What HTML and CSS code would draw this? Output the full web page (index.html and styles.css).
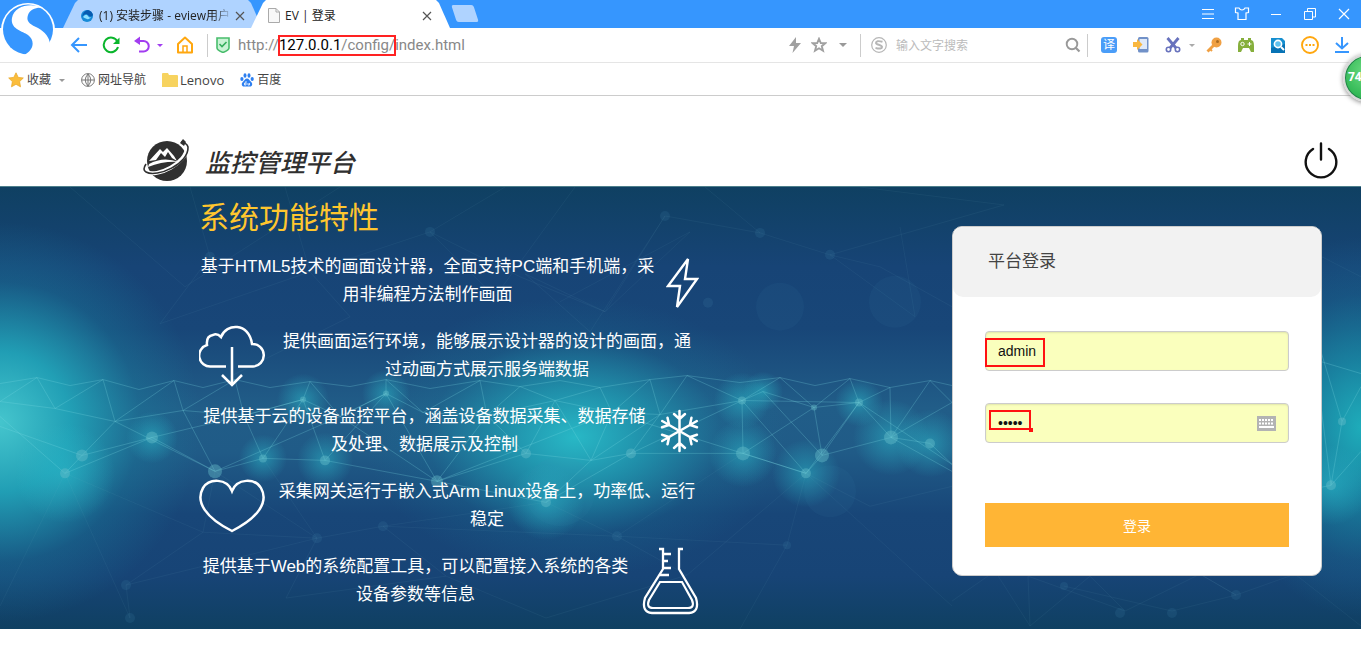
FILE: index.html
```html
<!DOCTYPE html>
<html lang="zh-CN">
<head>
<meta charset="utf-8">
<meta name="viewport" content="width=device-width, initial-scale=1">
<title>EV | 登录</title>
<link rel="stylesheet" href="styles.css">
</head>
<body>
<div class="browser">
  <svg class="sogou" viewBox="0 0 56 56" aria-hidden="true">
    <circle cx="28" cy="29" r="27" fill="#fff"/>
    <circle cx="28" cy="28.500" r="25" fill="#3696fe"/>
    <path d="M43 7C31 1 14 5 12 17C10 28 22 30 28 34C36 40 33 50 24 54C36 57 43 55 48 49C53 41 47 32 38 27C29 23 26 20 28 14C30 8 37 6 43 7Z" fill="#fff"/>
  </svg>
  <div class="ball"><span>74</span></div>

  <div class="tabbar">
    <div class="tab tab-back">
      <svg width="14" height="14" viewBox="0 0 14 14"><circle cx="7" cy="7" r="6" fill="#168bd8"/><path d="M2 8Q5 3 8 6T13 6Q12 2 8 1Q3 2 2 8Z" fill="#075bb0"/><path d="M3 8Q6 4 8 7T12 7Q10 11 7 10T3 8Z" fill="#8ee0ff"/></svg>
      <span class="tab-title fade">(1) 安装步骤 - eview用户</span>
      <button class="close" type="button" aria-label="关闭标签"><svg width="10" height="10" viewBox="0 0 10 10"><path d="M1 1L9 9M9 1L1 9" stroke="#555" stroke-width="1.200"/></svg></button>
    </div>
    <div class="tab tab-front">
      <svg width="12" height="15" viewBox="0 0 12 15"><path d="M.5.5H8L11.500 4V14.500H.5ZM8 .5V4H11.500" fill="#f8f8f8" stroke="#aaa"/></svg>
      <span class="tab-title">EV | 登录</span>
      <button class="close" type="button" aria-label="关闭标签"><svg width="10" height="10" viewBox="0 0 10 10"><path d="M1 1L9 9M9 1L1 9" stroke="#555" stroke-width="1.200"/></svg></button>
    </div>
    <button class="newtab" type="button" aria-label="新建标签"></button>
    <div class="window-buttons">
      <button type="button" aria-label="菜单"><svg width="14" height="12" viewBox="0 0 14 12"><path d="M1 1.500H13M1 6H13M1 10.500H13" stroke="#fff"/></svg></button>
      <button type="button" aria-label="皮肤"><svg width="16" height="14" viewBox="0 0 16 14"><path d="M5 1H1.500V5.500L4 6V12.500H12V6L14.500 5.500V1H11Q10 3 8 3T5 1Z" fill="none" stroke="#fff" stroke-width="1.200"/></svg></button>
      <button type="button" aria-label="最小化"><svg width="12" height="12" viewBox="0 0 12 12"><path d="M1 6.500H11" stroke="#fff"/></svg></button>
      <button type="button" aria-label="还原"><svg width="12" height="12" viewBox="0 0 12 12"><path d="M.5 3.500H8.500V11.500H.5ZM3.500 3V.5H11.500V9H9" fill="none" stroke="#fff"/></svg></button>
      <button type="button" aria-label="关闭"><svg width="12" height="12" viewBox="0 0 12 12"><path d="M1 1L11 11M11 1L1 11" stroke="#fff" stroke-width="1.200"/></svg></button>
    </div>
  </div>

  <div class="toolbar">
    <div class="nav">
      <button type="button" aria-label="后退"><svg width="18" height="18" viewBox="0 0 18 18"><path d="M17 9H2M9 2L2 9L9 16" fill="none" stroke="#3696fe" stroke-width="2"/></svg></button>
      <button type="button" aria-label="刷新"><svg width="18" height="18" viewBox="0 0 18 18"><path d="M15.500 5.500A7.300 7.300 0 1 0 16 11" fill="none" stroke="#0ab52c" stroke-width="2"/><path d="M17.500 1.500V8H11Z" fill="#0ab52c"/></svg></button>
      <button class="undo" type="button" aria-label="撤销"><svg width="18" height="18" viewBox="0 0 18 18"><path d="M3 5H10.500A5 5 0 0 1 10.500 15.500H6" fill="none" stroke="#a23df0" stroke-width="2"/><path d="M7 .5V9L1 5Z" fill="#a23df0"/></svg></button>
      <i class="caret purple"></i>
      <button type="button" aria-label="主页"><svg width="18" height="18" viewBox="0 0 18 18"><path d="M2 8L9 1.500L16 8V16.500H2Z" fill="none" stroke="#ffa70f" stroke-width="2" stroke-linejoin="round"/><path d="M7 16V10H11V16" fill="none" stroke="#ffa70f" stroke-width="1.500"/></svg></button>
    </div>
    <div class="address">
      <svg width="14" height="16" viewBox="0 0 14 16"><path d="M1 1H13V11Q13 13 7 15.500Q1 13 1 11Z" fill="#c9f3d5" stroke="#48bd6c" stroke-width="1.600"/><path d="M3.500 7L6 9.500L10.500 5" fill="none" stroke="#35ad5c" stroke-width="1.600"/></svg>
      <div class="url">http://<span class="marked"><b>127.0.0.1</b>/config/</span>index.html</div>
    </div>
    <div class="quick">
      <button type="button" aria-label="极速模式"><svg width="14" height="16" viewBox="0 0 14 16"><path d="M8 0L1 9H6L4.500 16L13 6H8Z" fill="#a0a0a0"/></svg></button>
      <button type="button" aria-label="收藏此页"><svg width="16" height="16" viewBox="0 0 16 16"><path d="M8 1.800L9.800 6L14.300 6.200L10.800 9.200L12 13.700L8 11.300L4 13.700L5.200 9.200L1.700 6.200L6.200 6Z" fill="none" stroke="#a0a0a0" stroke-width="1.900"/></svg></button>
      <button type="button" aria-label="更多"><i class="caret"></i></button>
    </div>
    <form class="search">
      <svg width="16" height="16" viewBox="0 0 16 16"><circle cx="8" cy="8" r="7.300" fill="none" stroke="#b6b6b6" stroke-width="1.200"/><path d="M11.500 4.800Q5 3 5 6C5 8 11 7.500 11 10Q11 12.500 4.500 11" fill="none" stroke="#b6b6b6" stroke-width="2"/></svg>
      <input type="text" placeholder="输入文字搜索" aria-label="输入文字搜索">
      <button type="button" aria-label="搜索"><svg width="16" height="16" viewBox="0 0 16 16"><circle cx="7" cy="7" r="5.300" fill="none" stroke="#999" stroke-width="1.900"/><path d="M11 11L14.500 14.500" stroke="#999" stroke-width="2.200"/></svg></button>
    </form>
    <div class="tools">
      <button class="translate" type="button"><span>译</span></button>
      <button type="button" aria-label="手机"><svg width="18" height="18" viewBox="0 0 18 18"><rect x="6" y="1" width="10.500" height="15.500" rx="1.500" fill="#7191c8"/><rect x="7.500" y="3" width="7.500" height="10" fill="#dfe9f8"/><path d="M1 6H5V3L10.500 8.500L5 14V11H1Z" fill="#f9b73f"/></svg></button>
      <button type="button" aria-label="截图"><svg width="16" height="18" viewBox="0 0 16 18"><path d="M2.500 2L11 12M13.500 2L5 12" stroke="#6872bd" stroke-width="2.800"/><circle cx="3.500" cy="13.500" r="2.200" fill="none" stroke="#6872bd" stroke-width="1.600"/><circle cx="12.500" cy="13.500" r="2.200" fill="none" stroke="#6872bd" stroke-width="1.600"/></svg></button>
      <i class="caret small"></i>
      <button type="button" aria-label="密码"><svg width="16" height="16" viewBox="0 0 16 16"><circle cx="10.500" cy="5.500" r="5" fill="#f0a043"/><path d="M8 8L1.500 14.500" stroke="#f0a043" stroke-width="2.800"/><path d="M4 12L6 14" stroke="#f0a043" stroke-width="2"/><circle cx="11.500" cy="4.500" r="1.500" fill="#a96b22"/></svg></button>
      <button type="button" aria-label="游戏"><svg width="18" height="16" viewBox="0 0 18 16"><path d="M4 3V1H7V3H11V1H14V3Q17 3 17 9V15H14L12 11H6L4 15H1V9Q1 3 4 3Z" fill="#86af3c"/><circle cx="5.500" cy="7" r="1.700" fill="none" stroke="#fff"/><path d="M10.500 7H14.500M12.500 5V9" stroke="#fff"/></svg></button>
      <button type="button" aria-label="查找"><svg width="16" height="18" viewBox="0 0 16 18"><path d="M1 2H12L15 5V16H1Z" fill="#168fd0"/><path d="M1 12L15 8V17H1Z" fill="#0873b5"/><circle cx="8" cy="8" r="3.600" fill="#61c2ee" stroke="#fff" stroke-width="1.600"/><path d="M11 11L14 14" stroke="#fff" stroke-width="2"/></svg></button>
      <button type="button" aria-label="更多工具"><svg width="18" height="18" viewBox="0 0 18 18"><circle cx="9" cy="9" r="8" fill="none" stroke="#ffa70f" stroke-width="1.900"/><path d="M4.500 9H6.500M8 9H10M11.500 9H13.500" stroke="#ffa70f" stroke-width="2"/></svg></button>
      <button type="button" aria-label="下载"><svg width="16" height="18" viewBox="0 0 16 18"><path d="M8 1V12M2 7L8 12.500L14 7M1 16H15" fill="none" stroke="#3696fe" stroke-width="2"/></svg></button>
    </div>
  </div>

  <nav class="bookmarks">
    <a class="fav" href="#"><svg width="16" height="16" viewBox="0 0 16 16"><path d="M8 .8L10.200 5.400L15.300 6L11.600 9.600L12.500 14.800L8 12.300L3.500 14.800L4.400 9.600L.7 6L5.800 5.400Z" fill="#fbbd3b" stroke="#eaa92b" stroke-width=".8"/></svg>收藏<i class="caret small"></i></a>
    <a class="sites" href="#"><svg width="14" height="14" viewBox="0 0 14 14"><path d="M7 .6A6.400 6.400 0 1 0 7 13.400A6.400 6.400 0 1 0 7 .6ZM7 1V13M1 7H13M7 1Q1.500 7 7 13M7 1Q12.500 7 7 13" fill="none" stroke="#777" stroke-width="1"/></svg>网址导航</a>
    <a class="lenovo" href="#"><svg width="16" height="14" viewBox="0 0 16 14"><path d="M0 1Q0 0 1 0H6L7 2H15Q16 2 16 3V14H0Z" fill="#f7d35f"/></svg>Lenovo</a>
    <a class="baidu" href="#"><svg width="14" height="14" viewBox="0 0 14 14" fill="#2d7ff0"><ellipse cx="1.900" cy="6" rx="1.600" ry="2"/><ellipse cx="5" cy="2.500" rx="1.500" ry="2.200"/><ellipse cx="9" cy="2.500" rx="1.500" ry="2.200"/><ellipse cx="12.200" cy="6" rx="1.600" ry="2"/><path d="M7 5.500C9 5.500 9.500 7.500 11 8.700C13 10.500 12.500 13.500 10 13.500H4C1.500 13.500 1 10.500 3 8.700C4.500 7.500 5 5.500 7 5.500Z"/><path d="M6 8V12H4.500V10H6M8 10V12H9.500V10" fill="none" stroke="#fff" stroke-width=".8"/></svg>百度</a>
  </nav>
</div>

<header class="site-header">
  <div class="brand">
    <svg width="48" height="44" viewBox="0 0 48 44" aria-hidden="true">
      <circle cx="24" cy="22" r="20" fill="#303030"/>
      <path d="M6 22L17 10L20 13L24 9L31 17L34 22L29 19L25 13L22 18L18 14L13 21Z" fill="#fff"/>
      <path d="M6 25Q20 17 36 23Q20 22 5 28Z" fill="#fff"/>
      <path d="M3 25Q-1 31 3 33C14 39 44 24 44 8Q44 4 40 3" fill="none" stroke="#fff" stroke-width="4"/>
      <path d="M3 25Q-1 31 3 33C14 39 46 25 45 8Q44 4 38 3" fill="none" stroke="#303030" stroke-width="1.600"/>
      <path d="M40 0L43 3L41 7L37 4Z" fill="#303030"/>
    </svg>
    <h1>监控管理平台</h1>
  </div>
  <button class="power" type="button" aria-label="退出"><svg width="34" height="38" viewBox="0 0 34 38"><path d="M9 7A15.300 15.300 0 1 0 25 7M17 1.500V17.500" fill="none" stroke="#111" stroke-width="2.400" stroke-linecap="round"/></svg></button>
</header>

<main class="hero">
  <svg class="mesh" viewBox="0 0 1361 443" preserveAspectRatio="none" aria-hidden="true">
    <defs>
      <radialGradient id="halo"><stop offset="0" stop-color="#2cc0cf" stop-opacity=".5"/><stop offset="1" stop-color="#2cc0cf" stop-opacity="0"/></radialGradient>
    </defs>
    <g fill="url(#halo)">
      <circle cx="303" cy="213" r="26"/><circle cx="386" cy="207" r="24"/><circle cx="152" cy="251" r="26"/><circle cx="325" cy="274" r="28"/><circle cx="263" cy="272" r="24"/><circle cx="546" cy="316" r="38"/><circle cx="742" cy="214" r="28"/><circle cx="763" cy="205" r="20"/><circle cx="806" cy="287" r="34"/><circle cx="891" cy="251" r="38"/><circle cx="743" cy="267" r="34"/><circle cx="930" cy="257" r="34"/><circle cx="859" cy="216" r="24"/><circle cx="65" cy="287" r="50"/><circle cx="1331" cy="299" r="40"/>
    </g>
    <g fill="none" stroke="#7fdae2" stroke-opacity=".26">
      <path d="M0 197L37 191L70 199L103 193L139 203L174 194L203 201L235 193L270 201L310 195L350 200L386 193L430 202L480 194L520 200L560 194L600 201L650 193L687 189L740 196L780 191L815 199L850 192L890 201L930 194L952 199"/>
      <path d="M0 215L37 191L55 222L103 193L115 235L174 194L183 224L235 193L244 229L303 213L310 195L340 230L386 207L386 193L423 226L480 194L487 229L520 200L555 214L600 201L612 226L650 193L660 228L687 189L742 214L780 191L814 221L850 192L859 216L890 201L891 251L930 194L952 216"/>
      <path d="M0 215L55 222L115 235L183 224L244 229L303 213L340 230L386 207L423 226L487 229L555 214L612 226L660 228L742 214L763 205L814 221L859 216L891 251L952 216"/>
      <path d="M0 240L82 269L65 287L0 230M65 287L152 251L215 285L115 235L82 269L152 251L244 229L263 272L303 213L325 274L386 207L437 295L325 274L263 272L215 285M183 224L215 285L340 230L437 295L487 229L526 267L555 214L591 274L660 228L631 267L742 214L743 267L814 221L822 269L859 216L806 287L743 267L631 267L591 274L546 316L437 295L526 267L591 274L612 226M546 316L631 267M437 295L612 226L743 267L806 287L822 269L891 251L930 257L952 278L859 216L742 214L806 287M822 269L763 205M891 251L952 285"/>
      <path d="M1321 165L1342 235L1361 200M1321 220L1331 299L1361 265M1342 235L1331 299L1321 301M1321 175L1361 187"/>
    </g>
    <g fill="none" stroke="#80bdd6" stroke-opacity=".07">
      <path d="M65 287L0 420M65 287L130 432L126 399L203 346L317 352L263 272M65 287L203 346L215 285L317 352L383 340L546 316L617 350L743 267M126 399L317 352L286 412L446 390L383 340L617 350L687 389L546 432L446 390M687 389L806 287L952 420M787 359L806 287L870 320L952 300M617 350L787 359L740 443M952 415L995 385L1030 440L1090 390L1125 425L1200 388L1236 409L1295 388L1361 440M1064 400L1172 425L1236 409L1200 388M1030 440L1028 390L1125 425"/>
      <path d="M190 0L210 70L310 85L285 0M210 70L160 137L310 85L350 130L230 190M310 85L430 45L505 0M430 45L495 110L575 0M430 45L520 90L605 125L690 45L560 115M605 125L665 29L760 46L705 0M760 46L830 68L1004 18L860 0M830 68L915 130L900 40M665 29L590 145L525 87L605 125M70 0L185 100L340 0M952 120L880 80L830 68M1130 40L1180 45M1322 70L1361 90"/>
    </g>
    <g fill="#68bfcb" fill-opacity=".42">
      <circle cx="152" cy="251" r="6"/><circle cx="215" cy="285" r="7"/><circle cx="82" cy="269" r="6"/><circle cx="65" cy="287" r="5"/><circle cx="263" cy="272" r="4"/><circle cx="325" cy="274" r="5"/><circle cx="303" cy="213" r="3"/><circle cx="386" cy="207" r="3"/><circle cx="437" cy="295" r="6"/><circle cx="631" cy="267" r="5"/><circle cx="526" cy="267" r="5"/><circle cx="546" cy="316" r="5"/><circle cx="743" cy="267" r="7"/><circle cx="822" cy="269" r="7"/><circle cx="806" cy="287" r="5"/><circle cx="891" cy="251" r="7"/><circle cx="742" cy="214" r="4"/><circle cx="814" cy="221" r="3"/><circle cx="859" cy="216" r="4"/><circle cx="930" cy="257" r="5"/><circle cx="1331" cy="299" r="5"/><circle cx="1342" cy="235" r="4"/>
    </g>
    <g fill="#4388ae" fill-opacity=".16">
      <circle cx="130" cy="432" r="5"/><circle cx="126" cy="399" r="5"/><circle cx="317" cy="352" r="5"/><circle cx="383" cy="340" r="5"/><circle cx="617" cy="350" r="5"/><circle cx="787" cy="359" r="4"/><circle cx="1236" cy="409" r="5"/><circle cx="995" cy="385" r="4"/><circle cx="1064" cy="400" r="4"/><circle cx="1120" cy="427" r="5"/><circle cx="1172" cy="427" r="5"/><circle cx="210" cy="70" r="5"/><circle cx="430" cy="45" r="5"/><circle cx="665" cy="29" r="5"/><circle cx="760" cy="46" r="5"/><circle cx="830" cy="68" r="5"/><circle cx="708" cy="116" r="5"/>
    </g>
    <g fill="#4388ae" fill-opacity=".08">
      <circle cx="560" cy="305" r="35"/><circle cx="830" cy="305" r="26"/><circle cx="780" cy="120" r="24"/><circle cx="895" cy="115" r="26"/>
    </g>
  </svg>

  <section class="features">
    <h2>系统功能特性</h2>
    <article>
      <p>基于HTML5技术的画面设计器，全面支持PC端和手机端，采用非编程方法制作画面</p>
      <svg width="33" height="62" viewBox="0 0 33 62"><path d="M22 9L2 36H14L11 57L31 29H19Z" fill="none" stroke="#fff" stroke-width="2.400"/></svg>
    </article>
    <article>
      <svg width="66" height="64" viewBox="0 0 66 64"><path d="M27 42.500H12A11 11 0 0 1 8 21Q7 12 14 11Q18 9 22 13C27-1 50-2 53 20A11 11 0 0 1 54 42.500H39M33 23V61M23 51L33 61L43 51" fill="none" stroke="#fff" stroke-width="2.500"/></svg>
      <p>提供画面运行环境，能够展示设计器的设计的画面，通过动画方式展示服务端数据</p>
    </article>
    <article>
      <p>提供基于云的设备监控平台，涵盖设备数据采集、数据存储及处理、数据展示及控制</p>
      <svg width="39" height="44" viewBox="0 0 39 44"><g id="arm" fill="none" stroke="#fff" stroke-width="2.500" stroke-linecap="round"><path d="M19.500 2V42M14 5L19.500 10L25 5M14 39L19.500 34L25 39"/></g><use href="#arm" transform="rotate(60 19.500 22)"/><use href="#arm" transform="rotate(120 19.500 22)"/></svg>
    </article>
    <article>
      <svg width="66" height="54" viewBox="0 0 66 54"><path d="M33 12C28-1 10-1 4 9C-4 23 7 39 33 52C59 39 70 23 62 9C56-1 38-1 33 12Z" fill="none" stroke="#fff" stroke-width="2.500"/></svg>
      <p>采集网关运行于嵌入式Arm Linux设备上，功率低、运行稳定</p>
    </article>
    <article>
      <p>提供基于Web的系统配置工具，可以配置接入系统的各类设备参数等信息</p>
      <svg width="57" height="68" viewBox="0 0 57 68"><path d="M17 2H21V22L3 51Q-1 65 10 66H47Q58 65 54 51L37 22V2H41M21 7H29M21 14H26M21 21H29M18 28H27" fill="none" stroke="#fff" stroke-width="2.300"/><path d="M18 35H40L50 53Q53 61 46 61H11Q4 61 7 53Z" fill="none" stroke="#fff" stroke-width="2.200"/></svg>
    </article>
  </section>

  <form class="login">
    <h3>平台登录</h3>
    <div class="login-body">
      <div class="field">
        <input type="text" value="admin" aria-label="用户名">
        <span class="frame frame-user"></span>
      </div>
      <div class="field">
        <input type="password" value="admin" aria-label="密码">
        <span class="frame frame-pass"></span>
        <button class="keyboard" type="button" aria-label="软键盘"><svg width="19" height="15" viewBox="0 0 19 15"><path d="M0 0H19V15H0Z" fill="#b3b3b3"/><path d="M2 4H17M2 7.500H17" stroke="#fff" stroke-width="2" stroke-dasharray="2 1"/><path d="M2 11H17" stroke="#fff" stroke-width="2"/></svg></button>
      </div>
      <button class="submit" type="button">登录</button>
    </div>
  </form>
</main>
</body>
</html>
```
FILE: styles.css
```css
* { box-sizing: border-box; }
body {
  margin: 0;
  background: #fff;
  color: #333;
  font-family: "Liberation Sans", "Noto Sans CJK SC", sans-serif;
  font-size: 12px;
  overflow-x: hidden;
}
button { border: 0; padding: 0; background: none; font: inherit; cursor: pointer; display: flex; align-items: center; justify-content: center; }
svg { flex: none; display: block; }

/* browser frame */
.browser { position: relative; font-family: "Open Sans", "Noto Sans CJK SC", sans-serif; }
.sogou { position: absolute; left: 0; top: 1px; width: 56px; height: 56px; z-index: 3; }
.ball {
  position: absolute; right: -30px; top: 54px; z-index: 3;
  width: 48px; height: 48px; border-radius: 50%;
  border: 2px solid #d8d8d8;
  background: radial-gradient(circle at 50% 35%, #6edc83, #33b956 70%, #1f8f3e);
  box-shadow: inset 0 0 0 1px #21804a, 0 1px 5px #888;
  color: #fff; font-weight: 700; line-height: 42px; padding-left: 3px;
}
.tabbar { display: flex; height: 28px; background: #3696fe; padding-left: 63px; }
.tab { display: flex; align-items: center; height: 28px; gap: 5px; clip-path: polygon(0 100%, 12px 3px, 15px 0, calc(100% - 14px) 0, calc(100% - 11px) 3px, 100% 100%); }
.tab-back { width: 199px; padding: 3px 16px 0 17px; background: #afd3ff; margin-right: -11px; }
.tab-front { width: 199px; padding: 3px 17px 0 17px; background: #fff; }
.tab-title { flex: 1; color: #222; white-space: nowrap; line-height: 18px; }
.fade { -webkit-mask-image: linear-gradient(90deg, #000 85%, transparent); mask-image: linear-gradient(90deg, #000 85%, transparent); }
.close { width: 12px; height: 16px; }
.tab-back .close { margin-left: -4px; }
.newtab { width: 22px; height: 17px; margin: 5px 0 0 4px; border-radius: 2px; background: #afd3ff; transform: skewX(18deg); }
.window-buttons { display: flex; margin-left: auto; }
.window-buttons button { width: 34px; height: 28px; }

.toolbar { display: flex; align-items: center; height: 35px; border-bottom: 1px solid #e5e5e5; padding: 0 3px 0 63px; }
.toolbar button { width: 32px; height: 34px; flex: none; }
.nav { display: flex; align-items: center; width: 145px; height: 23px; border-right: 1px solid #ccc; }
.toolbar .undo { width: 30px; }
.caret { flex: none; width: 0; height: 0; border: 4px solid transparent; border-top-color: #999; border-bottom: 0; }
.caret.small { border-width: 3px; border-bottom: 0; }
.caret.purple { border-width: 3px; border-bottom: 0; border-top-color: #a23df0; margin-right: 6px; }
.address { display: flex; align-items: center; gap: 8px; flex: 1; padding-left: 8px; }
.url { color: #888; font-family: Roboto, sans-serif; font-size: 15px; line-height: 20px; white-space: nowrap; }
.url b { color: #000; font-weight: 400; }
.marked { position: relative; }
.marked::after { content: ""; position: absolute; inset: -1px -1px -2px -1px; border: 2px solid #f22; }
.quick { display: flex; padding-right: 5px; }
.toolbar .quick button { width: 24px; }
.search { display: flex; align-items: center; width: 228px; height: 23px; margin: 0 5px 0 0; border: solid #ccc; border-width: 0 1px; padding-left: 10px; gap: 9px; }
.search input { flex: 1; min-width: 0; border: 0; padding: 0; outline: 0; background: none; font: inherit; font-size: 12px; }
.search input::placeholder { color: #bbb; }
.toolbar .search button { width: 29px; height: 22px; }
.tools { display: flex; align-items: center; }
.tools .caret { margin: 0 3px 0 0; border-top-color: #aaa; }
.translate span { width: 16px; height: 16px; border-radius: 3px; background: #4a9df8; color: #fff; font-size: 12px; line-height: 16px; text-align: center; }

.bookmarks { display: flex; align-items: center; height: 33px; border-bottom: 1px solid #ccc; padding: 2px 0 0 8px; gap: 16px; }
.bookmarks a { display: flex; align-items: center; gap: 3px; color: #444; text-decoration: none; line-height: 18px; }
.fav .caret { margin-left: 5px; }
.bookmarks .lenovo { font-size: 13px; gap: 2px; }

/* site */
.site-header { display: flex; align-items: center; justify-content: space-between; height: 90px; padding: 40px 23px 0 143px; }
.brand { display: flex; align-items: center; gap: 14px; }
.brand h1 { margin: 0; padding-top: 3px; font-size: 25px; line-height: 32px; font-weight: 500; font-style: italic; color: #303030; }

.hero {
  position: relative;
  display: flex; justify-content: space-between; align-items: flex-start;
  padding: 11px 39px 11px 199px;
  border-top: 1px solid #4d7f8c;
  background:
    radial-gradient(ellipse 200px 200px at 0 235px, #45c5cd, rgba(34,172,190,.85) 35%, rgba(25,130,160,.35) 70%, rgba(25,120,155,0)),
    radial-gradient(ellipse 210px 140px at 575px 250px, #28b8c6, rgba(32,164,184,.7) 35%, rgba(25,125,158,.2) 70%, rgba(25,120,155,0)),
    radial-gradient(ellipse 140px 190px at 100% 240px, #1eacba, rgba(24,145,170,.75) 35%, rgba(25,120,155,.3) 70%, rgba(25,120,155,0)),
    linear-gradient(#0f4062, #174476 18%, #184678 32%, #215d88 50%, #205b87 60%, #184678 74%, #174476 88%, #0f4062);
}
.mesh { position: absolute; inset: 0; width: 100%; height: 100%; }
.features { position: relative; width: 500px; }
.features h2 { margin: 0; height: 45px; font-size: 30px; line-height: 40px; font-weight: 400; color: #ffc62e; }
.features article { display: flex; align-items: center; gap: 10px; height: 75px; }
.features p { flex: 1; margin: 0; font-size: 17px; line-height: 28px; text-align: center; color: #fff; }

.login { position: relative; width: 370px; margin: 28px 0 0; background: #fff; border: 1px solid #ccc; border-radius: 10px; }
.login h3 { margin: 0; padding: 0 35px; font-size: 17px; line-height: 70px; font-weight: 400; color: #444; background: #f2f2f2; border-radius: 10px; }
.login-body { display: flex; flex-direction: column; padding: 34px 32px 28px; gap: 32px; }
.field { position: relative; }
.field input { display: block; width: 100%; height: 40px; padding: 0 12px; border: 1px solid #ccc; border-radius: 4px; background: #faffbd; box-shadow: inset 0 1px 2px rgba(0,0,0,.1); color: #111; font-family: "Liberation Sans", sans-serif; font-size: 14px; outline: 0; }
.frame { position: absolute; border: 2px solid #f11; pointer-events: none; }
.frame-user { left: 0; top: 7px; width: 60px; height: 29px; }
.frame-pass { left: 4px; top: 7px; width: 42px; height: 20px; }
.frame-pass::after { content: ""; position: absolute; right: -4px; bottom: -4px; width: 4px; height: 4px; background: #f11; }
.keyboard { position: absolute; right: 13px; top: 13px; }
.submit { height: 44px; margin-top: 28px; background: #ffb535; color: #fff; font-size: 14px; }
```
